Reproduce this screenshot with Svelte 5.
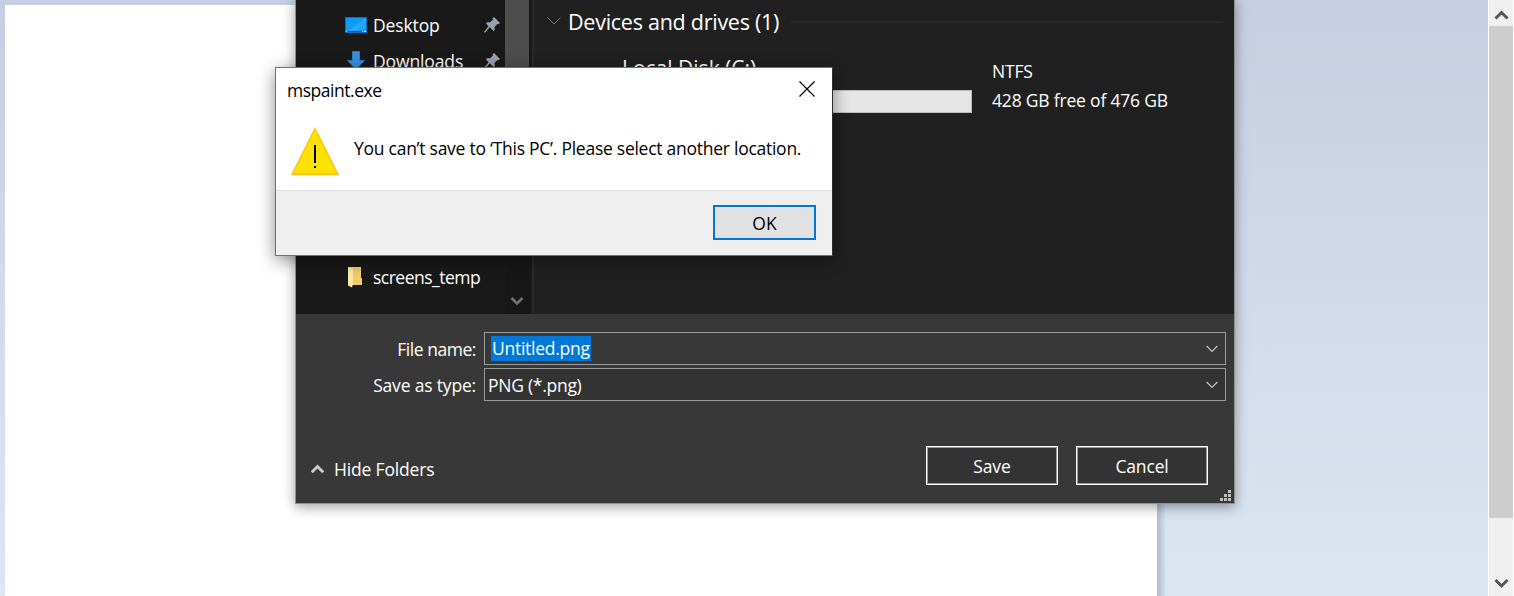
<script>
  const fields = [
    { label: 'File name:', value: 'Untitled.png', selected: true },
    { label: 'Save as type:', value: 'PNG (*.png)', selected: false }
  ];
  const places = [
    { name: 'Desktop', kind: 'desktop' },
    { name: 'Downloads', kind: 'downloads' }
  ];
</script>

<main class="workspace">
  <div class="canvas-area"><div class="sheet"></div><div class="sheet-shadow"></div></div>
  <div class="page-scroll">
    <svg class="arrow" viewBox="0 0 24 26"><path d="M6.5 18.5 12.5 12.5 18.5 18.5" fill="none" stroke="#555" stroke-width="3" /></svg>
    <div class="page-thumb"></div>
    <svg class="arrow" viewBox="0 0 24 26"><path d="M6.5 10 12.5 16 18.5 10" fill="none" stroke="#555" stroke-width="3" /></svg>
  </div>

  <section class="save-dialog">
    <div class="browser">
      <nav class="sidebar">
        <ul class="places">
          {#each places as place}
            <li class="place">
              {#if place.kind === 'desktop'}
                <svg class="place-icon" viewBox="0 0 24 24">
                  <defs><linearGradient id="screen" x2="1" y2="1"><stop offset=".5" stop-color="#109bfb" /><stop offset=".52" stop-color="#2aaafc" /><stop offset="1" stop-color="#1599f8" /></linearGradient></defs>
                  <rect x="1.5" y="4.5" width="21" height="15" fill="url(#screen)" stroke="#0873c4" />
                  <path d="M2 18.5H22" stroke="#075da5" /><path d="M2 18.5h1M18 18.5h1M20 18.5h2" stroke="#fff" />
                </svg>
              {:else}
                <svg class="place-icon" viewBox="0 0 24 24"><path d="M8.5 2.5h7v9h5L12 20.500 3.500 11.500h5Z" fill="#398fdf" stroke="#2c7ac3" /></svg>
              {/if}
              <span class="place-name {place.kind}">{place.name}</span>
              <svg class="pin" viewBox="0 0 16 16"><path d="M10 0 16 6 14.500 7.300 13.300 7 10.500 10 10.800 13 9.500 14 5.800 10.300 1 15.500 0 15.500 0 15 4.500 9.200 2 6.200 3 5.200 6.200 5.300 9 2.500 8.500 1.300Z" fill="#98a3ab" /></svg>
            </li>
          {/each}
          <li class="place last">
            <svg class="place-icon" viewBox="0 0 24 24"><path d="M4 1H17V12H18V19H4Z" fill="#f4d675" /><path d="M9 1H17V12H18V19H9Z" fill="#efcd6c" /><path d="M4 1 9 4V18L8 21.500 4 19.500Z" fill="#ffe8a4" /></svg>
            <span class="place-name temp">screens_temp</span>
          </li>
        </ul>
        <div class="side-scroll">
          <div class="side-thumb"></div>
          <svg class="side-arrow" viewBox="0 0 24 26"><path d="M6.500 10 12 15.500 17.500 10" fill="none" stroke="#737373" stroke-width="2.600" /></svg>
        </div>
      </nav>
      <div class="content">
        <header class="group">
          <svg class="group-arrow" viewBox="0 0 14 10"><path d="M.5 1.500 7 8 13.500 1.500" fill="none" stroke="#777" /></svg>
          <h2>Devices and drives (1)</h2>
          <div class="rule"></div>
        </header>
        <div class="drive">
          <div class="drive-main"><span class="drive-name">Local Disk (C:)</span><div class="usage"></div></div>
          <div class="drive-info"><span class="ntfs">NTFS</span><span class="free">428 GB free of 476 GB</span></div>
        </div>
      </div>
    </div>

    <footer class="form">
      <div class="fields">
        {#each fields as field}
          <div class="field">
            <span class="label" class:name-label={field.selected}>{field.label}</span>
            <div class="combo" class:editable={field.selected}>
              <span class="value">{field.value}</span>
              <svg class="combo-arrow" viewBox="0 0 12 8"><path d="M.7 1 6 6.300 11.300 1" fill="none" stroke="#c3c3c3" stroke-width="1.200" /></svg>
            </div>
          </div>
        {/each}
      </div>
      <div class="actions">
        <div class="hide"><svg viewBox="0 0 16 12"><path d="M1.800 9.200 7.500 3.500 13.200 9.200" fill="none" stroke="#ccc" stroke-width="2.900" /></svg><span>Hide Folders</span></div>
        <button class="action save">Save</button>
        <button class="action cancel">Cancel</button>
      </div>
      <svg class="grip" viewBox="0 0 11 11"><path d="M8 0h3v3h-3zM4 4h3v3h-3zM8 4h3v3h-3zM0 8h3v3h-3zM4 8h3v3h-3zM8 8h3v3h-3z" fill="#bebebe" /></svg>
    </footer>
  </section>

  <section class="message">
    <header class="title"><span>mspaint.exe</span><svg viewBox="0 0 16 16"><path d="M.5.5 15.500 15.500M15.500.5.5 15.500" stroke="#000" stroke-width="1.150" /></svg></header>
    <div class="message-body">
      <svg class="warning" viewBox="0 0 48 49"><path d="M24 1.500 47 47.500H1Z" fill="#fde100" stroke="#ffbd16" stroke-width="1.300" /><path d="M23 18h2v18h-2zM23 39h2v2h-2z" fill="#000" /></svg>
      <p>You can’t save to ‘This PC’. Please select another location.</p>
    </div>
    <footer class="message-actions"><button class="ok">OK</button></footer>
  </section>
</main>

<style>
  :global(body) { margin: 0; overflow: hidden; }
  * { box-sizing: border-box; }
  svg { display: block; flex: none; }
  span, p, h2, button { white-space: nowrap; }
  .workspace { position: relative; width: 1514px; height: 596px; overflow: hidden; display: flex; background: linear-gradient(#c5cfe1, #dce6f2); font: 17.500px/24px "Open Sans", "Noto Sans", sans-serif; }
  .canvas-area { flex: 1; display: flex; padding: 5px 0 0 5px; }
  .sheet { width: 1152px; background: #fff; }
  .sheet-shadow { width: 8px; background: linear-gradient(90deg, #afbed2, #c3d0e2 60%, #d2ddeb); }
  .page-scroll { width: 26px; display: flex; flex-direction: column; border-left: 1px solid #fff; border-right: 1px solid #fff; background: #f0f0f0; }
  .arrow { width: 24px; height: 26px; }
  .page-thumb { height: 492px; margin-bottom: 52px; background: #cdcdcd; }

  .save-dialog { position: absolute; left: 295px; top: -1px; width: 940px; height: 505px; border: 1px solid #909090; background: #383838; color: #fff; box-shadow: 0 3px 12px rgba(0,0,0,.38); }
  .browser { height: 314px; display: flex; background: #202020; }
  .sidebar { width: 238px; display: flex; background: #191919; border-right: 2px solid #2b2b2b; }
  .places { list-style: none; margin: 0; padding: 7px 0 18px 48px; width: 209px; display: flex; flex-direction: column; }
  .place { height: 36px; display: flex; align-items: center; }
  .last { margin-top: auto; }
  .place-icon { width: 24px; height: 24px; }
  .place-name { flex: 1; margin-left: 5px; letter-spacing: -.12px; }
  .temp { letter-spacing: -.5px; padding-bottom: 2px; }
  .pin { width: 16px; height: 16px; margin-right: 5px; }
  .side-scroll { width: 24px; display: flex; flex-direction: column; background: #171717; }
  .side-thumb { height: 190px; background: #4d4d4d; }
  .side-arrow { width: 24px; height: 26px; margin-top: auto; }
  .content { flex: 1; padding: 0 11px 0 13px; }
  .group { height: 44px; display: flex; align-items: center; }
  .group-arrow { width: 14px; height: 10px; margin-top: -3px; }
  h2 { margin: 0 0 0 7px; font-size: 21.500px; line-height: 30px; font-weight: 400; letter-spacing: -.26px; }
  .rule { flex: 1; height: 2px; margin-left: 12px; background: #2b2b2b; }
  .drive { display: flex; padding: 11px 0 0 75px; }
  .drive-main { width: 350px; }
  .drive-name { display: block; height: 35px; font-size: 21px; line-height: 26px; }
  .usage { height: 23px; border: 1px solid #bcbcbc; background: #e6e6e6; }
  .drive-info { margin: 4px 0 0 20px; display: flex; flex-direction: column; gap: 5px; letter-spacing: -.19px; }
  .form { height: 189px; position: relative; padding: 18px 8px 0 0; }
  .fields { display: grid; gap: 3px; }
  .field { height: 33px; display: flex; align-items: center; }
  .label { width: 180px; margin-right: 8px; text-align: right; letter-spacing: -.18px; }
  .name-label { letter-spacing: -.45px; }
  .combo { flex: 1; height: 33px; display: flex; align-items: center; padding: 1px 7px 0 3px; border: 1px solid #9b9b9b; background: #333; }
  .value { letter-spacing: -.27px; }
  .editable { background: #383838; padding: 0 7px 1px 6px; }
  .combo-arrow { width: 12px; height: 8px; margin-left: auto; }
  .editable .combo-arrow { margin-top: 1px; }
  .editable .value { padding: 0 1px; background: #0078d7; line-height: 25px; }
  .actions { display: flex; align-items: center; padding: 45px 18px 0 14px; }
  .hide { display: flex; align-items: center; flex: 1; padding-top: 7px; letter-spacing: -.17px; }
  .hide svg { width: 16px; height: 12px; margin-right: 8px; }
  button { font: inherit; padding: 0; }
  .action { width: 132px; height: 39px; margin-left: 18px; color: #fff; background: #333; border: 1px solid #fff; box-shadow: inset 0 0 0 1px #999; letter-spacing: -.15px; }
  .grip { position: absolute; right: 3px; bottom: 2px; width: 11px; height: 11px; }

  .message { position: absolute; left: 275px; top: 67px; width: 558px; height: 189px; border: 1px solid #707070; border-right-color: #303030; background: #fff; color: #000; box-shadow: 0 4px 16px rgba(0,0,0,.45); }
  .title { height: 44px; display: flex; justify-content: space-between; align-items: center; padding: 0 17px 1px 11px; letter-spacing: -.47px; }
  .title svg { width: 16px; height: 16px; margin-bottom: 2px; }
  .message-body { height: 78px; display: flex; padding: 15px 0 0 15px; }
  .warning { width: 48px; height: 49px; }
  p { margin: 9px 0 0 15px; letter-spacing: -.26px; }
  .message-actions { height: 65px; display: flex; justify-content: flex-end; padding: 14px 16px 0 0; background: #efefef; border-top: 1px solid #dfdfdf; }
  .ok { width: 103px; height: 35px; color: #000; background: #e1e1e1; border: 2px solid #0078d7; padding-top: 1px; }
</style>
